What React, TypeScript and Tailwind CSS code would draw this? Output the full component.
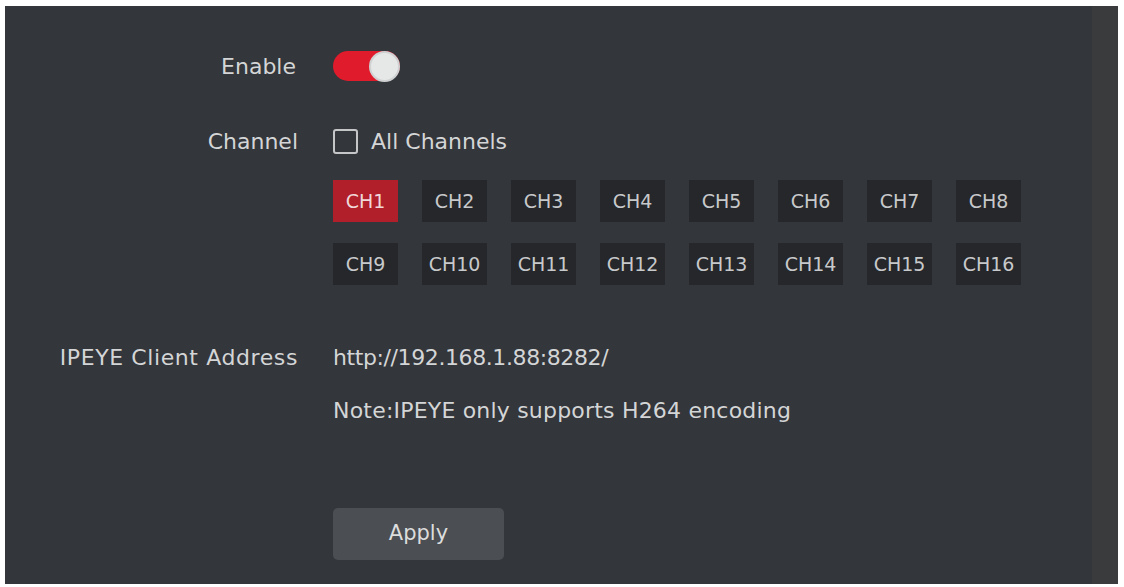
import { useState } from 'react';

const channels = Array.from({ length: 16 }, (_, i) => `CH${i + 1}`);

export default function App() {
  const [enabled, setEnabled] = useState(true);
  const [allChannels, setAllChannels] = useState(false);
  const [selected, setSelected] = useState<string[]>(['CH1']);

  const toggleChannel = (ch: string) => {
    setSelected((prev) => (prev.includes(ch) ? prev.filter((c) => c !== ch) : [...prev, ch]));
  };

  return (
    <div className="w-[1124px] h-[587px] bg-white pt-[6px] pl-[5px] font-['DejaVu_Sans',sans-serif]">
      <div className="w-[1113px] h-[578px] bg-[#33363a] flex">
        <div className="flex-1 grid grid-cols-[293px_1fr] gap-x-[35px] content-start pt-[44px] text-[22px] text-[#d4d5d6]">
          {/* Enable */}
          <div className="h-[32px] flex items-center justify-end pr-[2px]">Enable</div>
          <div className="h-[32px] flex items-center">
            <button
              onClick={() => setEnabled((v) => !v)}
              className={`w-[67px] h-[30px] rounded-full flex items-center ${enabled ? 'bg-[#e01b2c] justify-end' : 'bg-[#55585c] justify-start'}`}
            >
              <span className="w-[31px] h-[31px] rounded-full bg-[#e6e8e7] border-2 border-[#cfd1d2]" />
            </button>
          </div>

          {/* Channel */}
          <div className="mt-[46px] h-[26px] flex items-center justify-end">Channel</div>
          <div className="mt-[46px] h-[26px] flex items-center gap-[13px]">
            <button
              onClick={() => setAllChannels((v) => !v)}
              className="w-[25px] h-[25px] rounded-[3px] border-2 border-[#c4c6c8] flex items-center justify-center"
            >
              {allChannels && <span className="w-[11px] h-[11px] bg-[#c4c6c8]" />}
            </button>
            <span>All Channels</span>
          </div>

          <div />
          <div className="mt-[26px] grid grid-cols-[repeat(8,65px)] gap-x-[24px] gap-y-[21px]">
            {channels.map((ch) => (
              <button
                key={ch}
                onClick={() => toggleChannel(ch)}
                className={`h-[42px] flex items-center justify-center text-[19px] ${selected.includes(ch) ? 'bg-[#b11f2a] text-[#f0d8d8]' : 'bg-[#25272a] text-[#c8c9ca]'}`}
              >
                {ch}
              </button>
            ))}
          </div>

          {/* IPEYE */}
          <div className="mt-[58px] h-[28px] flex items-center justify-end tracking-[0.6px]">IPEYE Client Address</div>
          <div className="mt-[58px] h-[28px] flex items-center tracking-[-0.4px]">http://192.168.1.88:8282/</div>

          <div />
          <div className="mt-[25px] h-[28px] flex items-center tracking-[0.2px]">Note:IPEYE only supports H264 encoding</div>

          <div />
          <div className="mt-[84px]">
            <button className="w-[171px] h-[52px] rounded-[5px] bg-[#4b4e52] text-[21px] text-[#dcdddd]">
              Apply
            </button>
          </div>
        </div>
        <div className="w-[26px] bg-[#3a3b3c]" />
      </div>
    </div>
  );
}
